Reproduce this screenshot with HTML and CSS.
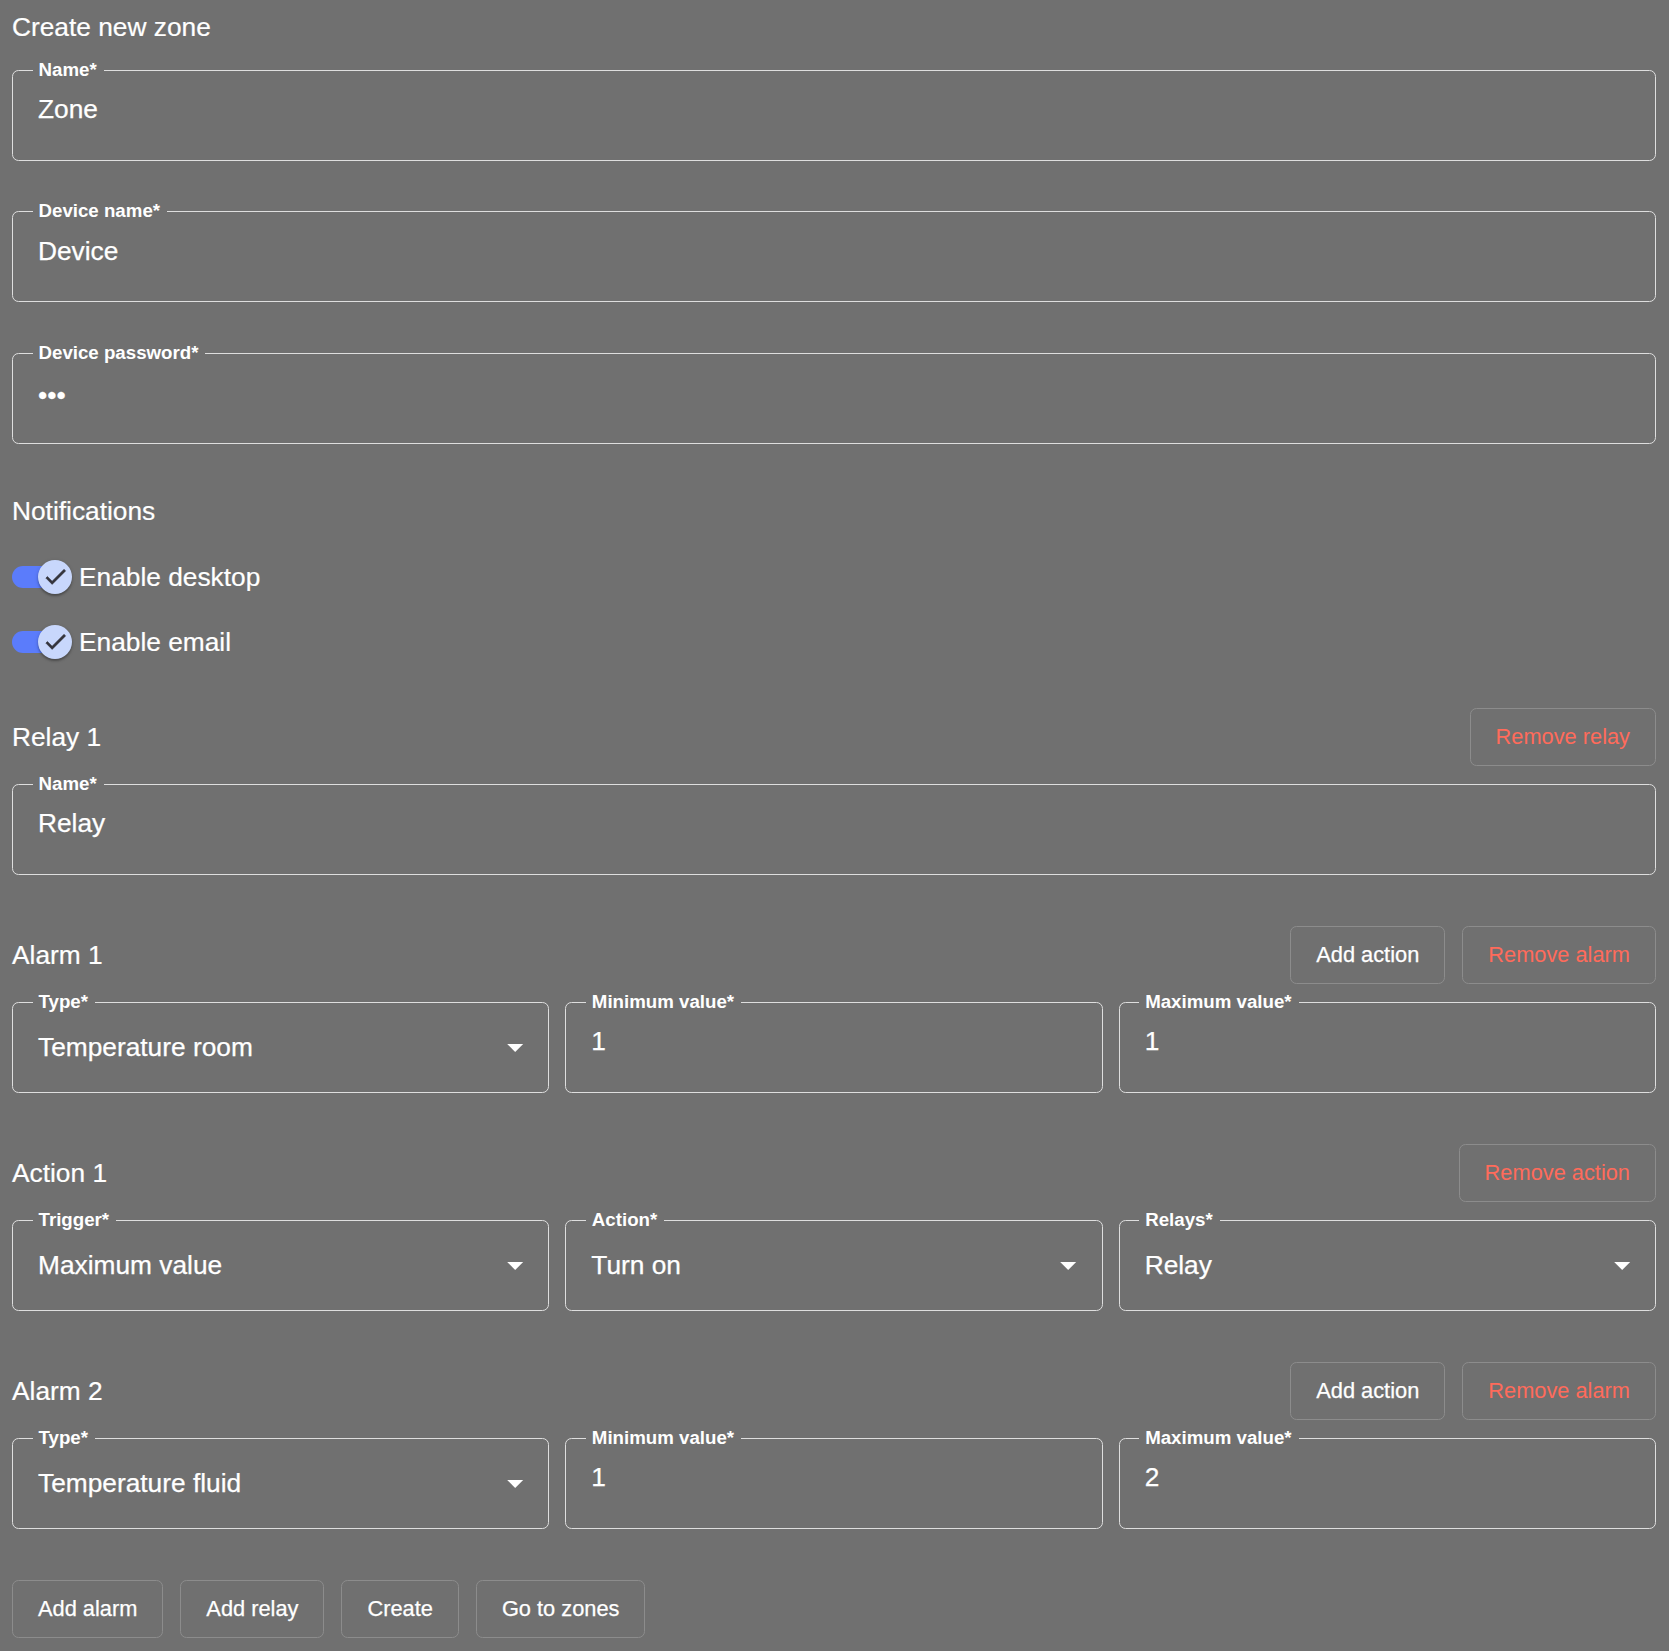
FILE: index.html
```html
<!DOCTYPE html>
<html lang="en">
<head>
<meta charset="utf-8">
<title>Create new zone</title>
<link rel="stylesheet" href="styles.css">
</head>
<body>
<div class="page">
  <h1 class="title">Create new zone</h1>

  <div class="fields">
    <div class="field"><span class="label">Name*</span><span class="value">Zone</span></div>
    <div class="field"><span class="label">Device name*</span><span class="value">Device</span></div>
    <div class="field"><span class="label">Device password*</span><span class="value dots">&bull;&bull;&bull;</span></div>
  </div>

  <h2 class="title notif">Notifications</h2>
  <div class="toggles">
    <div class="toggle-row">
      <span class="switch"><span class="track"></span><span class="thumb"><svg viewBox="0 0 24 24"><path d="M9 16.17 4.83 12l-1.42 1.41L9 19 21 7l-1.41-1.41z"/></svg></span></span>
      <span class="toggle-text">Enable desktop</span>
    </div>
    <div class="toggle-row">
      <span class="switch"><span class="track"></span><span class="thumb"><svg viewBox="0 0 24 24"><path d="M9 16.17 4.83 12l-1.42 1.41L9 19 21 7l-1.41-1.41z"/></svg></span></span>
      <span class="toggle-text">Enable email</span>
    </div>
  </div>

  <section class="group first">
    <div class="group-head">
      <h2 class="title">Relay 1</h2>
      <div class="actions"><button class="btn danger">Remove relay</button></div>
    </div>
    <div class="body">
      <div class="field"><span class="label">Name*</span><span class="value">Relay</span></div>
    </div>
  </section>

  <section class="group">
    <div class="group-head">
      <h2 class="title">Alarm 1</h2>
      <div class="actions"><button class="btn">Add action</button><button class="btn danger">Remove alarm</button></div>
    </div>
    <div class="body grid3">
      <div class="field select"><span class="label">Type*</span><span class="value">Temperature room</span><svg class="arrow" viewBox="0 0 24 24"><path d="M7 10l5 5 5-5z"/></svg></div>
      <div class="field"><span class="label">Minimum value*</span><span class="value">1</span></div>
      <div class="field"><span class="label">Maximum value*</span><span class="value">1</span></div>
    </div>
  </section>

  <section class="group">
    <div class="group-head">
      <h2 class="title">Action 1</h2>
      <div class="actions"><button class="btn danger">Remove action</button></div>
    </div>
    <div class="body grid3">
      <div class="field select"><span class="label">Trigger*</span><span class="value">Maximum value</span><svg class="arrow" viewBox="0 0 24 24"><path d="M7 10l5 5 5-5z"/></svg></div>
      <div class="field select"><span class="label">Action*</span><span class="value">Turn on</span><svg class="arrow" viewBox="0 0 24 24"><path d="M7 10l5 5 5-5z"/></svg></div>
      <div class="field select"><span class="label">Relays*</span><span class="value">Relay</span><svg class="arrow" viewBox="0 0 24 24"><path d="M7 10l5 5 5-5z"/></svg></div>
    </div>
  </section>

  <section class="group">
    <div class="group-head">
      <h2 class="title">Alarm 2</h2>
      <div class="actions"><button class="btn">Add action</button><button class="btn danger">Remove alarm</button></div>
    </div>
    <div class="body grid3">
      <div class="field select"><span class="label">Type*</span><span class="value">Temperature fluid</span><svg class="arrow" viewBox="0 0 24 24"><path d="M7 10l5 5 5-5z"/></svg></div>
      <div class="field"><span class="label">Minimum value*</span><span class="value">1</span></div>
      <div class="field"><span class="label">Maximum value*</span><span class="value">2</span></div>
    </div>
  </section>

  <div class="footer">
    <button class="btn">Add alarm</button>
    <button class="btn">Add relay</button>
    <button class="btn">Create</button>
    <button class="btn">Go to zones</button>
  </div>
</div>
</body>
</html>
```
FILE: styles.css
```css
html, body {
  margin: 0;
  background: #707070;
}
body {
  font-family: "Liberation Sans", Arial, sans-serif;
  color: #ffffff;
}
.page {
  padding: 8px 13px 8px 12px;
}
.title {
  margin: 0;
  font-size: 26.3px;
  font-weight: 400;
  line-height: 38px;
  color: #ffffff;
  -webkit-text-stroke: 0.2px #ffffff;
}
.fields {
  margin-top: 23.5px;
  display: flex;
  flex-direction: column;
  gap: 50.5px;
}
.field {
  position: relative;
  box-sizing: border-box;
  height: 91px;
  border: 1px solid #dedede;
  border-radius: 6.5px;
  padding: 0 25px;
  display: flex;
  align-items: flex-start;
  min-width: 0;
}
.label {
  position: absolute;
  top: -10px;
  left: 19.5px;
  padding: 0 7px 0 6px;
  background: #707070;
  font-weight: 700;
  font-size: 18.7px;
  line-height: 18.7px;
  white-space: nowrap;
}
.value {
  font-size: 26.3px;
  line-height: 30px;
  padding-top: 23.5px;
  white-space: nowrap;
  -webkit-text-stroke: 0.25px #ffffff;
}
.value.dots {
  padding-top: 26px;
}
.field.select {
  align-items: center;
  padding-right: 14px;
}
.field.select .value {
  padding-top: 0;
  flex: 1;
}
.arrow {
  flex: none;
  width: 38.4px;
  height: 38.4px;
  fill: #ffffff;
}
.notif {
  margin-top: 48px;
}
.toggles {
  margin-top: 14.5px;
}
.toggle-row {
  height: 65px;
  display: flex;
  align-items: center;
}
.switch {
  display: inline-flex;
  align-items: center;
}
.track {
  width: 54px;
  height: 22px;
  border-radius: 11px;
  background: #5b7cfb;
}
.thumb {
  margin-left: -28px;
  width: 34px;
  height: 34px;
  border-radius: 50%;
  background: #c8d7fc;
  box-shadow: 0 2px 2px rgba(0, 0, 0, 0.25), 0 1px 4px rgba(0, 0, 0, 0.15);
  display: flex;
  align-items: center;
  justify-content: center;
}
.thumb svg {
  width: 27px;
  height: 27px;
  fill: #34343c;
  stroke: #34343c;
  stroke-width: 0.5px;
}
.toggle-text {
  margin-left: 7px;
  font-size: 26.3px;
  line-height: 30px;
  -webkit-text-stroke: 0.2px #ffffff;
}
.group {
  margin-top: 51px;
}
.group.first {
  margin-top: 33.5px;
}
.group-head {
  height: 58px;
  display: flex;
  align-items: center;
  justify-content: space-between;
}
.actions {
  display: flex;
  gap: 17px;
}
.body {
  margin-top: 18px;
}
.grid3 {
  display: grid;
  grid-template-columns: repeat(3, minmax(0, 1fr));
  gap: 16px;
}
.btn {
  box-sizing: border-box;
  height: 58px;
  padding: 0 25px;
  border: 1px solid #8c8c8c;
  border-radius: 6.5px;
  background: transparent;
  color: #ffffff;
  font-family: "Liberation Sans", Arial, sans-serif;
  font-size: 21.8px;
  line-height: 1;
  white-space: nowrap;
  -webkit-text-stroke: 0.25px #ffffff;
}
.btn.danger {
  color: #ff6b5b;
  -webkit-text-stroke: 0;
}
.footer {
  margin-top: 51px;
  display: flex;
  gap: 17px;
}
```
